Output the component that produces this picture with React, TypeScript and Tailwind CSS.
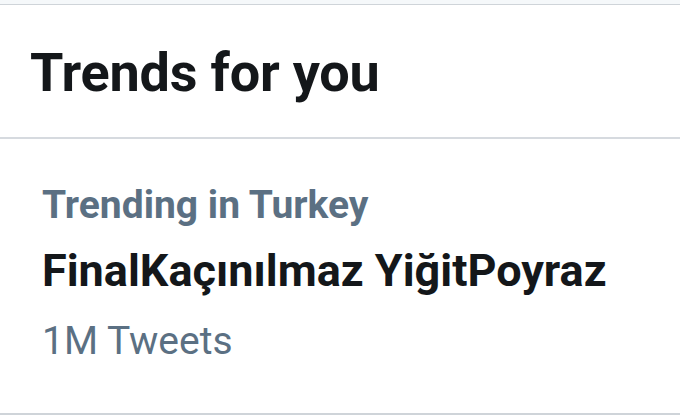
import React from 'react';

const App: React.FC = () => {
  return (
    <div className="w-[680px] h-[420px] bg-white overflow-hidden" style={{ fontFamily: 'Roboto, sans-serif' }}>
      <div className="h-[4px] bg-[#f5f8fa]" />
      <div className="border-t border-[#cfd4d9]">
        <div className="h-[134px] pl-[30px] pt-[4px] flex items-center border-b-2 border-[#d6dadf]">
          <h2 className="text-[54px] font-bold text-[#14171a] leading-none tracking-[-0.2px]">Trends for you</h2>
        </div>
        <div className="h-[276px] pl-[42px] pt-[42px] border-b-2 border-[#cfd4d9]">
          <div className="text-[39px] font-bold text-[#5b7083] leading-[48px]">Trending in Turkey</div>
          <div className="mt-[16px] text-[45px] font-bold text-[#14171a] leading-[52px]">FinalKaçınılmaz YiğitPoyraz</div>
          <div className="mt-[22px] text-[39px] text-[#5b7083] leading-[44px]">1M Tweets</div>
        </div>
      </div>
    </div>
  );
};

export default App;
